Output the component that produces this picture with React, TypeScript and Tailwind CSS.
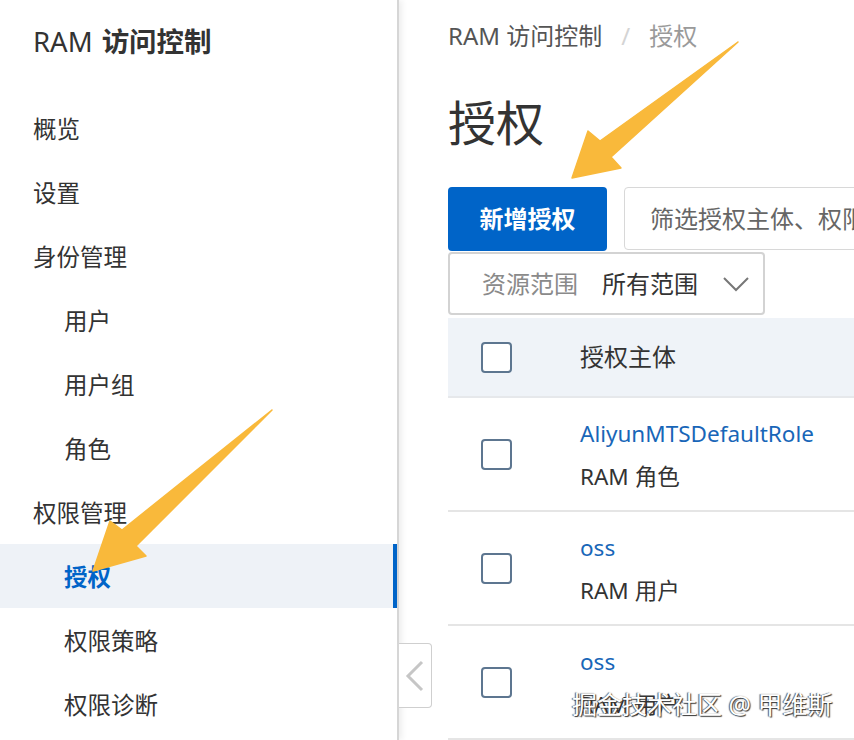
const font = 'font-["Noto_Sans","Noto_Sans_CJK_SC",sans-serif]';

interface NavItem {
  label: string;
  child?: boolean;
  active?: boolean;
}

const navItems: NavItem[] = [
  { label: '概览' },
  { label: '设置' },
  { label: '身份管理' },
  { label: '用户', child: true },
  { label: '用户组', child: true },
  { label: '角色', child: true },
  { label: '权限管理' },
  { label: '授权', child: true, active: true },
  { label: '权限策略', child: true },
  { label: '权限诊断', child: true },
];

const rows = [
  { name: 'AliyunMTSDefaultRole', type: 'RAM 角色' },
  { name: 'oss', type: 'RAM 用户' },
  { name: 'oss', type: 'RAM 用户' },
];

function Checkbox() {
  return (
    <span className="block h-[31px] w-[31px] rounded-[4px] border-2 border-[#5d7690] bg-white" />
  );
}

// 标注箭头
function Arrow({ points }: { points: string }) {
  return (
    <polygon fill="#f9b93b" points={points} stroke="#f9b93b" strokeLinejoin="round" strokeWidth="1.5" />
  );
}

export default function App() {
  return (
    <div className={`relative flex h-[740px] w-[854px] overflow-hidden bg-white text-[#333] ${font}`}>
      {/* 侧边栏 */}
      <aside className="relative z-10 w-[399px] shrink-0 border-r-2 border-[#d6d6d6] bg-white shadow-[3px_0_6px_rgba(0,0,0,0.07)]">
        <div className="flex h-[96px] items-start pl-[33px] pt-[24px] text-[27.5px] leading-[36px]">
          <span>RAM</span>
          <span className="ml-[9px] font-bold">访问控制</span>
        </div>
        <nav>
          {navItems.map((item, i) => (
            <div
              className={`relative flex h-[64px] items-center pt-[3px] text-[23.5px] ${
                item.child ? 'pl-[64px]' : 'pl-[33px]'
              } ${item.active ? 'bg-[#eef2f7] font-bold text-[#0064c8]' : ''}`}
              key={i}
            >
              {item.label}
              {item.active && (
                <span className="absolute top-0 right-0 h-full w-[4px] bg-[#0064c8]" />
              )}
            </div>
          ))}
        </nav>
      </aside>

      {/* 收起按钮 */}
      <div className="absolute top-[643px] left-[399px] z-20 flex h-[65px] w-[33px] items-center justify-center rounded-r-[4px] border border-l-0 border-[#cfcfcf] bg-white">
        <svg fill="none" height="32" viewBox="0 0 22 32" width="22">
          <polyline points="18,2 4,16 18,30" stroke="#c6c6c6" strokeWidth="3" />
        </svg>
      </div>

      {/* 主体 */}
      <main className="min-w-0 flex-1 pl-[49px]">
        <div className="flex h-[74px] items-center pb-[2px] text-[24px]">
          <span className="text-[#555]">RAM 访问控制</span>
          <span className="mx-[19px] text-[#d4d4d4]">/</span>
          <span className="text-[#9a9a9a]">授权</span>
        </div>
        <h1 className="flex h-[100px] items-center pb-[2px] text-[48px] leading-none">授权</h1>

        <div className="mt-[13px] flex h-[64px] w-[600px] gap-[17px]">
          <button className="h-[64px] w-[159px] shrink-0 rounded-[4px] bg-[#0064c8] text-[24px] font-bold text-white">
            新增授权
          </button>
          <div className="flex h-[63px] flex-1 items-center rounded-[4px] border border-[#d8d8d8] pl-[25px] text-[24px] whitespace-nowrap text-[#666]">
            筛选授权主体、权限策略名称
          </div>
        </div>

        <div className="mt-[1px] flex h-[63px] w-[317px] items-center rounded-[4px] border-2 border-[#d3d3d3] pl-[32px] text-[24px]">
          <span className="text-[#8a8a8a]">资源范围</span>
          <span className="ml-[24px]">所有范围</span>
          <svg className="ml-[24px]" fill="none" height="16" viewBox="0 0 28 16" width="28">
            <polyline points="2,2 14,14 26,2" stroke="#777" strokeWidth="2" />
          </svg>
        </div>

        <div className="mt-[3px] w-[500px]">
          <div className="flex h-[80px] items-center border-b-2 border-[#e6e8eb] bg-[#eff3f8]">
            <div className="w-[132px] shrink-0 pl-[33px]">
              <Checkbox />
            </div>
            <span className="text-[24px]">授权主体</span>
          </div>
          {rows.map((row, i) => (
            <div className="flex h-[114px] items-center border-b-2 border-[#e5e5e5]" key={i}>
              <div className="w-[132px] shrink-0 pl-[33px]">
                <Checkbox />
              </div>
              <div className="flex flex-col gap-[11px] pt-[2px] text-[22.5px] leading-[32px]">
                <span className="text-[#1866b8]">{row.name}</span>
                <span>{row.type}</span>
              </div>
            </div>
          ))}
        </div>
      </main>

      {/* 箭头标注 */}
      <svg className="pointer-events-none absolute inset-0 z-30" height="740" width="854">
        <Arrow points="738,42 600,141 588,131 572,178 621,168 611,157" />
        <Arrow points="272,410 122,530 110,521 93,571 146,556 136,546" />
      </svg>

      {/* 水印 */}
      <div className="pointer-events-none absolute top-[686px] left-[572px] z-40 text-[25px] whitespace-nowrap text-white [text-shadow:1px_1px_1px_#333,-1px_0_1px_#555]">
        掘金技术社区 @ 甲维斯
      </div>
    </div>
  );
}
